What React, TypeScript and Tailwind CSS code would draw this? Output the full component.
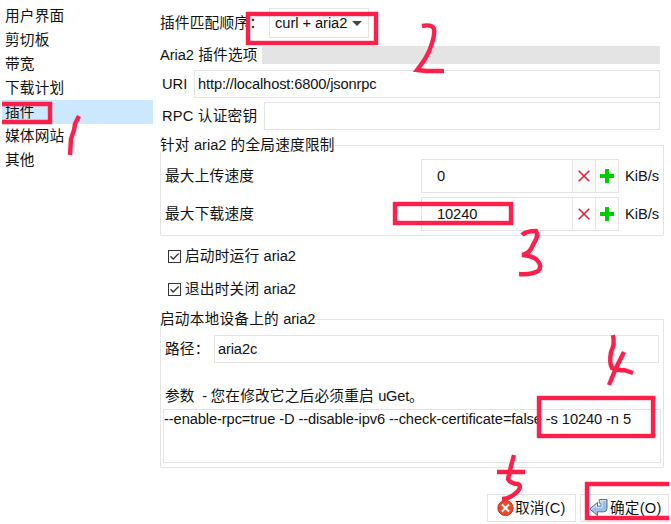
import React from "react";

const categories = ["用户界面", "剪切板", "带宽", "下载计划", "插件", "媒体网站", "其他"];

function Latin({ children }: { children: React.ReactNode }) {
  return <span className="tracking-[-0.05px]">{children}</span>;
}

function Field({ children, className = "" }: { children?: React.ReactNode; className?: string }) {
  return (
    <div className={`flex h-7 items-center border border-[#e4e4e4] bg-white pl-[3px] tracking-[-0.14px] ${className}`}>
      {children}
    </div>
  );
}

function SpeedRow({ label, value, atMinimum }: { label: string; value: string; atMinimum?: boolean }) {
  return (
    <div className="flex h-[34px] items-center">
      <span className="w-[256px] shrink-0">{label}</span>
      <div className="flex h-full w-[198px] border border-[#e4e4e4]">
        <div className="flex flex-1 items-center pl-[15px] tracking-[-0.1px]">{value}</div>
        <div
          className={`flex w-[23px] items-center justify-center border-l border-[#e4e4e4] ${atMinimum ? "bg-[#fafafa]" : ""}`}
        >
          <svg width="12" height="12" viewBox="0 0 12 12">
            <path d="M.7 .7L11.3 11.3M11.3 .7L.7 11.3" stroke="#dc1c2e" strokeWidth="1.5" />
          </svg>
        </div>
        <div className="flex w-[23px] items-center justify-center border-l border-[#e4e4e4]">
          <svg width="14" height="14" viewBox="0 0 14 14" shapeRendering="crispEdges">
            <path d="M5 0h4v5h5v4H9v5H5V9H0V5h5z" fill="#00cc00" />
          </svg>
        </div>
      </div>
      <span className="ml-1.5 tracking-[-0.05px]">KiB/s</span>
    </div>
  );
}

function Check({ label }: { label: string }) {
  return (
    <div className="flex h-[33px] items-center pl-2">
      <svg width="13" height="13" viewBox="0 0 13 13">
        <rect x="0.5" y="0.5" width="12" height="12" fill="#fff" stroke="#333" />
        <path d="M2.5 6.3L5.2 9L10.7 3.5" fill="none" stroke="#333" strokeWidth="1.3" />
      </svg>
      <span className="mb-0.5 ml-1">
        {label} <Latin>aria2</Latin>
      </span>
    </div>
  );
}

function GroupTitle({ children }: { children: React.ReactNode }) {
  return (
    <div className="flex h-3.5 items-start">
      <span className="leading-[14px]">{children}</span>
      <span className="mt-[7px] h-[7px] flex-1 border-t border-r border-[#e4e4e4]" />
    </div>
  );
}

function Annotations() {
  return (
    <svg
      className="pointer-events-none absolute top-0 left-0"
      width="669"
      height="524"
      viewBox="0 0 669 524"
      fill="none"
      stroke="#ff1f4b"
      strokeWidth="4.4"
    >
      <path d="M2 104H50V122H2" />
      <rect x="248" y="14" width="128" height="29" />
      <rect x="395" y="204" width="116" height="19" />
      <rect x="539" y="398" width="114" height="38" />
      <path d="M669 484H587V518H669" />
      <path d="M79 116L75 124L74 130L71 139L70 155" />
      <path d="M422 26Q432 24 434 29Q435 34 432 43Q430 51 425 59Q421 65 417 70L426 71H444" />
      <path d="M522 235Q526 231 536 231Q539 236 534 243L531 249Q528 254 522 255Q533 256 537 260Q543 266 538 271Q531 275 519 274" />
      <path d="M613 335Q615 344 611 352Q609 363 612 368Q618 371 624 370L633 373M624 352L616 368L609 385" />
      <path d="M514 455L511 466L508 479Q511 484 518 484Q522 486 518 491Q510 499 502 499M497 472H525" />
    </svg>
  );
}

export default function App() {
  return (
    <div className="relative flex h-[524px] w-[671px] overflow-hidden bg-white font-['Liberation_Sans','Noto_Sans_CJK_SC',sans-serif] text-[14.667px] leading-[22px] tracking-[0.2px] whitespace-nowrap text-[#111]">
      <nav className="ml-0.5 w-[151px] shrink-0 pt-1">
        {categories.map((name) => (
          <div
            key={name}
            className={`flex h-6 items-center pl-[3px] ${name === "插件" ? "bg-[#cce8ff]" : ""}`}
          >
            {name}
          </div>
        ))}
      </nav>

      <main className="ml-[7px] w-[511px] shrink-0 pt-2">
        <div className="flex h-[30px] items-center">
          <span className="w-[109px]">插件匹配顺序：</span>
          <div className="flex h-full w-[100px] items-center border border-[#e4e4e4] pl-[5px] tracking-[-0.05px]">
            curl + aria2
            <svg className="ml-[5px]" width="10" height="5" viewBox="0 0 10 5">
              <path d="M0 0H10L5 5z" fill="#444" />
            </svg>
          </div>
        </div>
        <div className="mt-2 flex h-[18px] w-[500px] items-center">
          <span className="w-[102px]">
            <Latin>Aria2</Latin> 插件选项
          </span>
          <div className="h-full flex-1 bg-[#e4e4e4]" />
        </div>
        <div className="mt-1.5 flex w-[500px] items-center pl-0.5">
          <span className="w-8 tracking-normal">URI</span>
          <Field className="flex-1">http://localhost:6800/jsonrpc</Field>
        </div>
        <div className="mt-1 flex w-[500px] items-center pl-0.5">
          <span className="w-[102px]">RPC 认证密钥</span>
          <Field className="flex-1" />
        </div>

        <section className="mt-2 w-[504px]">
          <GroupTitle>
            针对 <Latin>aria2</Latin> 的全局速度限制
          </GroupTitle>
          <div className="flex h-[84px] flex-col gap-1 border-x border-b border-[#e4e4e4] pt-[7px] pl-1">
            <SpeedRow label="最大上传速度" value="0" atMinimum />
            <SpeedRow label="最大下载速度" value="10240" />
          </div>
        </section>

        <div className="mt-1 h-[72px]">
          <Check label="启动时运行" />
          <Check label="退出时关闭" />
        </div>

        <section className="w-[504px]">
          <GroupTitle>
            启动本地设备上的 <Latin>aria2</Latin>
          </GroupTitle>
          <div className="h-[142px] border-x border-b border-[#e4e4e4] pt-[9px] pl-0.5">
            <div className="flex items-center pl-0.5">
              <span className="w-[49px]">路径：</span>
              <Field className="w-[445px]">aria2c</Field>
            </div>
            <div className="mt-[22px] h-6 pl-0.5 tracking-[0.2px]">
              参数 <span className="tracking-[-0.9px]">&nbsp;-</span> 您在修改它之后必须重启 <span className="tracking-[-0.2px]">uGet。</span>
            </div>
            <div className="h-[54px] w-[498px] border border-[#e4e4e4] leading-[18px] tracking-[-0.095px]">
              --enable-rpc=true -D --disable-ipv6 --check-certificate=false -s 10240 -n 5
            </div>
          </div>
        </section>

        <div className="mt-[26px] flex h-7 justify-end gap-1 pr-0.5">
          <button className="flex w-[89px] items-center border border-[#e4e4e4] pl-[9px]">
            <svg className="shrink-0" width="18" height="18" viewBox="0 0 18 18">
              <circle cx="8.5" cy="9" r="7.6" fill="#ed4b28" stroke="#b5321c" />
              <path d="M5 5.5L12 12.5M12 5.5L5 12.5" stroke="#fff" strokeWidth="2" />
            </svg>
            取消(C)
          </button>
          <button className="flex w-[89px] items-center border border-[#e4e4e4] pl-2">
            <svg className="mr-0.5 shrink-0" width="19" height="20" viewBox="0 0 19 20">
              <path
                d="M.8 11L8.5 4.4V8.2H12V5.2H10.3V1.5H18V10.5Q18 13.8 14.8 13.8H8.5V17.6z"
                fill="#9dbfe3"
                stroke="#46719e"
                strokeLinejoin="round"
              />
              <path d="M2.5 11L7.5 6.8V9.3H13V4.2H11.3V2.5H17" fill="none" stroke="#deebf7" />
            </svg>
            确定(O)
          </button>
        </div>
      </main>
      <Annotations />
    </div>
  );
}
